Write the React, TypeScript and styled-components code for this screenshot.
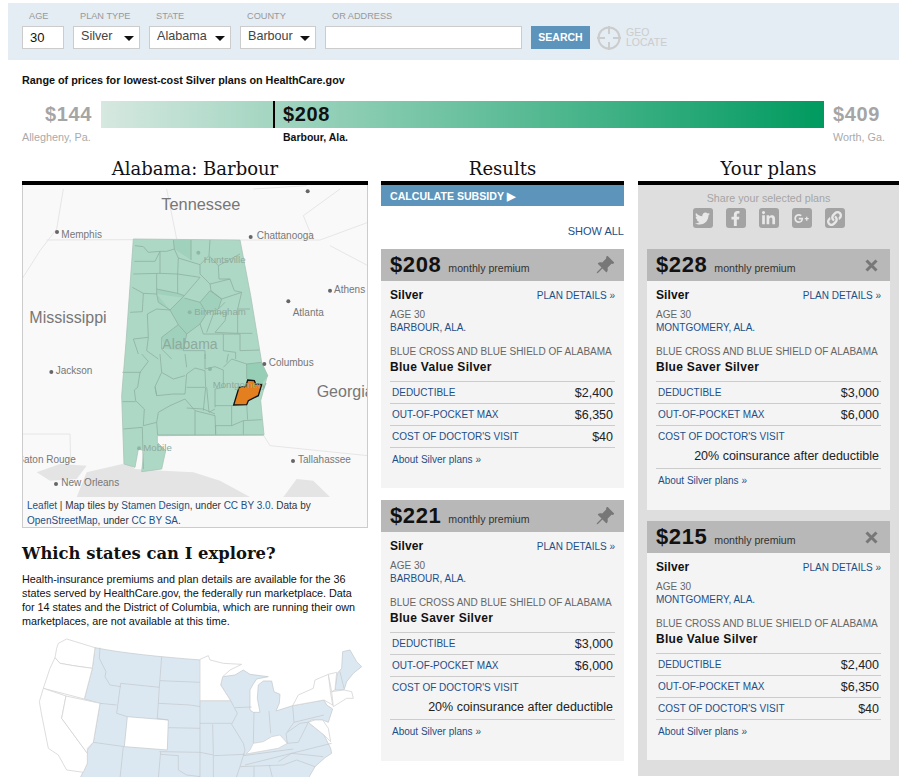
import styled, { createGlobalStyle } from "styled-components";
import { BsPinAngleFill } from "react-icons/bs";
import { FaFacebookF, FaGooglePlusG, FaLink, FaLinkedinIn, FaTwitter } from "react-icons/fa";

const GlobalStyle = createGlobalStyle`
  html, body {
    margin: 0;
    padding: 0;
    background: #fff;
    font-family: "Liberation Sans", Arial, sans-serif;
    overflow: hidden;
  }
`;

const Page = styled.div`
  width: 905px;
  height: 777px;
  overflow: hidden;
  padding-top: 3px;
  box-sizing: border-box;
`;

const SearchBar = styled.div`
  margin: 0 6px 0 8px;
  height: 57px;
  box-sizing: border-box;
  padding: 8px 0 0 14px;
  background: #e4ecf4;
  display: flex;
  gap: 9px;
`;

const Field = styled.div<{ $width: number }>`
  width: ${(p) => p.$width}px;
  flex: none;
`;

const FieldLabel = styled.div`
  height: 15px;
  padding-left: 7px;
  font-size: 9.2px;
  line-height: 10px;
  color: #999;
  white-space: nowrap;
`;

const InputBox = styled.div`
  height: 23px;
  box-sizing: border-box;
  background: #fff;
  border: 1px solid #ccc;
  font-size: 12.6px;
  line-height: 19px;
  padding-left: 7px;
  color: #444;
  position: relative;
`;

const AgeBox = styled(InputBox)`
  color: #111;
  font-size: 13px;
  line-height: 21px;
`;

const Caret = styled.span`
  position: absolute;
  right: 5px;
  top: 9px;
  border-left: 5px solid transparent;
  border-right: 5px solid transparent;
  border-top: 5px solid #111;
`;

const SearchButton = styled.div`
  margin-top: 15px;
  width: 59px;
  height: 23px;
  background: #5d94bb;
  color: #fff;
  font-size: 10.5px;
  font-weight: bold;
  line-height: 22px;
  text-align: center;
`;

const GeoLocate = styled.div`
  margin: 15px 0 0 -2px;
  height: 23px;
  display: flex;
  align-items: center;
  gap: 5px;
  color: #ccc;
  font-size: 10.5px;
  line-height: 9.5px;
`;

const RangeTitle = styled.div`
  margin: 14px 0 0 22px;
  font-size: 10.8px;
  line-height: 13px;
  font-weight: bold;
  color: #111;
`;

const RangeGrid = styled.div`
  margin: 14px 0 0 22px;
  display: grid;
  grid-template-columns: 70px 723px 70px;
  column-gap: 9px;
  row-gap: 2px;
`;

const RangeEnd = styled.div<{ $align: string }>`
  font-size: 20px;
  font-weight: bold;
  line-height: 27px;
  letter-spacing: 0.6px;
  color: #a5a5a5;
  text-align: ${(p) => p.$align};
`;

const RangeBar = styled.div`
  height: 27px;
  position: relative;
  background: linear-gradient(to right, #d6e8e0, #009a5f);
`;

const Marker = styled.div`
  position: absolute;
  left: 172px;
  top: 0;
  bottom: 0;
  border-left: 2px solid #000;
  padding-left: 8px;
  font-size: 20px;
  font-weight: bold;
  line-height: 27px;
  letter-spacing: 0.6px;
  color: #111;
`;

const RangePlace = styled.div`
  font-size: 10.8px;
  line-height: 14px;
  color: #aaa;
  white-space: nowrap;
`;

const RangeCurrent = styled.div`
  padding-left: 182px;
  font-size: 10.5px;
  font-weight: bold;
  line-height: 14px;
  color: #111;
`;

const Columns = styled.div`
  margin: 14px 0 0 22px;
  display: grid;
  grid-template-columns: 346px 243px 262px;
  column-gap: 13px;
  align-items: start;
`;

const RightColumn = styled.div`
  margin-left: 1px;
`;

const ColumnTitle = styled.h2`
  margin: 0;
  height: 27px;
  box-sizing: border-box;
  border-bottom: 4px solid #000;
  font-family: "DejaVu Serif", serif;
  font-size: 18px;
  font-weight: normal;
  line-height: 22px;
  text-align: center;
  color: #111;
  white-space: nowrap;
`;

const MapFrame = styled.div`
  height: 343px;
  box-sizing: border-box;
  border: 1px solid #ccc;
  border-top: 0;
  background: #f9f9f9;
  overflow: hidden;
`;

const MapSvg = styled.svg`
  display: block;
  margin-left: -1px;
`;

const Attribution = styled.div`
  padding: 1px 4px 0 4px;
  font-size: 10px;
  line-height: 15px;
  color: #333;
`;

const Link = styled.a`
  color: #1d4f87;
`;

const ExploreTitle = styled.h3`
  margin: 15px 0 0;
  font-family: "DejaVu Serif", serif;
  font-size: 16.4px;
  font-weight: bold;
  line-height: 22px;
  color: #111;
  white-space: nowrap;
`;

const ExploreText = styled.p`
  margin: 7px 0 0;
  padding-right: 6px;
  font-size: 10.8px;
  line-height: 14px;
  color: #111;
`;

const UsMap = styled.svg`
  display: block;
  margin-top: 7px;
`;

const SubsidyBar = styled.div`
  height: 21px;
  background: #5d94bb;
  color: #fff;
  font-size: 10.6px;
  font-weight: bold;
  line-height: 22px;
  padding-left: 9px;
`;

const ShowAll = styled.div`
  height: 43px;
  box-sizing: border-box;
  padding-top: 19px;
  font-size: 11px;
  line-height: 13px;
  text-align: right;
  color: #1d4f87;
`;

const CardStack = styled.div<{ $gap: number }>`
  display: flex;
  flex-direction: column;
  gap: ${(p) => p.$gap}px;
`;

const Card = styled.div`
  background: #f4f4f4;
`;

const CardHead = styled.div`
  height: 32px;
  background: #b8b8b8;
  display: flex;
  align-items: center;
  padding: 0 9px;
`;

const Premium = styled.span`
  font-size: 22px;
  font-weight: bold;
  letter-spacing: 0.6px;
  color: #111;
`;

const PremiumNote = styled.span`
  margin: 5px 0 0 7px;
  font-size: 10.6px;
  color: #333;
  flex: 1;
`;

const CardBody = styled.div<{ $height: number }>`
  padding: 7px 9px 0;
  height: ${(p) => p.$height}px;
  box-sizing: border-box;
`;

const MetalRow = styled.div`
  display: flex;
  justify-content: space-between;
  align-items: center;
  height: 14px;
`;

const Metal = styled.span`
  font-size: 12px;
  font-weight: bold;
  letter-spacing: 0.1px;
  color: #111;
`;

const DetailsLink = styled.span`
  font-size: 10px;
  color: #1d4f87;
`;

const Age = styled.div`
  margin-top: 6px;
  font-size: 10px;
  line-height: 13px;
  color: #666;
`;

const Place = styled.div`
  font-size: 10px;
  line-height: 13px;
  color: #1d4f87;
`;

const Carrier = styled.div`
  margin-top: 11px;
  font-size: 10px;
  line-height: 13px;
  color: #666;
  white-space: nowrap;
`;

const PlanName = styled.div`
  margin-top: 2px;
  height: 21px;
  font-size: 12px;
  line-height: 14px;
  font-weight: bold;
  letter-spacing: 0.3px;
  color: #111;
`;

const Stat = styled.div`
  border-top: 1px solid #ccc;
  height: 22px;
  box-sizing: border-box;
  padding: 0 2px;
  display: flex;
  justify-content: space-between;
  align-items: center;
`;

const StatName = styled.span`
  font-size: 10px;
  color: #1d4f87;
`;

const StatValue = styled.span`
  font-size: 12.5px;
  color: #222;
`;

const Coinsurance = styled.div`
  height: 21px;
  box-sizing: border-box;
  padding: 1px 2px 0;
  font-size: 12.5px;
  line-height: 17px;
  text-align: right;
  color: #222;
`;

const AboutLink = styled.div`
  border-top: 1px solid #ccc;
  padding: 5px 2px 0;
  font-size: 10px;
  line-height: 13px;
  color: #1d4f87;
`;

const PlansPanel = styled.div`
  background: #dedede;
  height: 591px;
  padding: 0 9px;
`;

const ShareBlock = styled.div`
  height: 64px;
  box-sizing: border-box;
  padding-top: 6px;
  text-align: center;
  font-size: 10.7px;
  line-height: 15px;
  color: #a5a5a5;
`;

const ShareIcons = styled.div`
  margin-top: 2px;
  display: flex;
  justify-content: center;
  gap: 13px;
`;

const ShareIcon = styled.span`
  width: 20px;
  height: 20px;
  border-radius: 3px;
  background: #a3a3a3;
  color: #e8e8e8;
  display: flex;
  align-items: center;
  justify-content: center;
  font-size: 15px;
`;

const CloseIcon = styled.svg`
  margin-right: 3px;
`;

const PinIcon = styled(BsPinAngleFill)`
  color: #777;
  font-size: 20px;
`;

type Plan = {
  price: string;
  place: string;
  name: string;
  deductible: string;
  maxCost: string;
  visit?: string;
};

const results: Plan[] = [
  { price: "$208", place: "BARBOUR, ALA.", name: "Blue Value Silver", deductible: "$2,400", maxCost: "$6,350", visit: "$40" },
  { price: "$221", place: "BARBOUR, ALA.", name: "Blue Saver Silver", deductible: "$3,000", maxCost: "$6,000" },
];

const saved: Plan[] = [
  { price: "$228", place: "MONTGOMERY, ALA.", name: "Blue Saver Silver", deductible: "$3,000", maxCost: "$6,000" },
  { price: "$215", place: "MONTGOMERY, ALA.", name: "Blue Value Silver", deductible: "$2,400", maxCost: "$6,350", visit: "$40" },
];

function PlanCard({ plan, removable }: { plan: Plan; removable?: boolean }) {
  return (
    <Card>
      <CardHead>
        <Premium>{plan.price}</Premium>
        <PremiumNote>monthly premium</PremiumNote>
        {removable ? (
          <CloseIcon width="13" height="13" viewBox="0 0 13 13">
            <path d="M1.5 1.5l10 10M11.5 1.5l-10 10" stroke="#777" strokeWidth="3" />
          </CloseIcon>
        ) : (
          <PinIcon />
        )}
      </CardHead>
      <CardBody $height={plan.visit ? 207 : 229}>
        <MetalRow>
          <Metal>Silver</Metal>
          <DetailsLink>PLAN DETAILS »</DetailsLink>
        </MetalRow>
        <Age>AGE 30</Age>
        <Place>{plan.place}</Place>
        <Carrier>BLUE CROSS AND BLUE SHIELD OF ALABAMA</Carrier>
        <PlanName>{plan.name}</PlanName>
        <Stat>
          <StatName>DEDUCTIBLE</StatName>
          <StatValue>{plan.deductible}</StatValue>
        </Stat>
        <Stat>
          <StatName>OUT-OF-POCKET MAX</StatName>
          <StatValue>{plan.maxCost}</StatValue>
        </Stat>
        <Stat>
          <StatName>COST OF DOCTOR'S VISIT</StatName>
          {plan.visit && <StatValue>{plan.visit}</StatValue>}
        </Stat>
        {!plan.visit && <Coinsurance>20% coinsurance after deductible</Coinsurance>}
        <AboutLink>About Silver plans »</AboutLink>
      </CardBody>
    </Card>
  );
}

const northCounties = `M60,35 L85,38 L100,55 L135,52 L155,52 L178,45 L175,18 M135,52 L120,82 L58,82 M135,52 L135,118 L55,120
M178,45 L190,72 L188,120 M190,72 L255,92 L255,120 M228,18 L228,78 M285,18 L282,65 L255,92 M282,65 L310,95 L375,60
M310,95 L312,135 L345,135 L358,170 L380,175 M255,120 L285,150 L345,135 M285,150 L288,170 L320,195 M135,118 L188,120 L255,130
M188,120 L188,178 L208,185 L255,130 M125,120 L125,180 L85,178 L82,233 L45,235 M52,160 L85,178 M125,165 L188,178
M125,180 L130,205 L165,228 L125,225 L97,240 L100,310 M208,185 L165,228 L190,272 L140,310 M208,192 L255,205 L275,238 L255,270 L215,300 L190,272
M255,205 L285,170 L320,195 L310,225 L275,238 M320,195 L380,175 L368,225 L368,298 M310,225 L330,205 M275,295 L295,240 L335,235 L330,260 L300,295
M300,295 L368,298 L412,298 M368,225 L405,225 M255,270 L265,300 L325,300 L325,350 M215,300 L205,350 M325,300 L375,300 L375,350 L435,348
M100,310 L55,315 L70,360 M100,310 L95,350 L130,375 M140,310 L140,345 L170,375 M205,350 L270,350 L270,375 M325,350 L362,355 L362,375`;

const southCounties = `M80,0 L100,22 L75,55 L68,100 L58,108 L62,140 L88,165 L85,215 L125,205 L130,175 L165,155 L210,135 L240,170 L300,185 L302,240
M125,205 L128,243 M135,0 L140,55 L120,98 L125,125 L175,120 L210,120 L215,60 L240,42 L270,50 L272,100 L265,170 M215,100 L270,100
M215,162 L265,165 L300,180 M140,55 L175,75 L210,65 M210,0 L215,40 M270,45 L300,38 L325,48 L325,100 L300,105 L300,160 M275,100 L282,175 L300,165
M325,40 L350,15 L395,30 L395,75 M270,0 L270,45 M340,0 L335,25 M300,155 L355,155 M350,155 L350,215 L385,200 L440,197 M395,150 L398,197
M300,215 L350,215 M385,200 L385,243 M240,170 L240,243 M22,55 L78,55 M22,143 L62,143 M25,225 L82,220 L85,345 M125,125 L120,98 M395,30 L440,25
M128,243 L445,243 M302,215 L302,243`;

function AlabamaMap() {
  return (
    <MapSvg width="346" height="312" viewBox="6 18 1038 936">
      <g fill="none" stroke="#e6e6e6" strokeWidth="3">
        <path d="M6,300 L60,215 L110,150 L130,30 M80,183 L340,182 M660,183 L900,183 L1044,130 M880,183 L850,110 L960,30 M930,200 L1044,260 M730,768 L750,800 L1044,830 M6,765 L150,765 L152,850 M700,30 L860,20 M440,30 L470,180" />
      </g>
      <path d="M170,954 L200,880 L320,852 L345,870 L430,875 L520,880 L600,905 L690,954 Z M50,880 L120,855 L200,860 L170,900 L90,905 Z M790,954 L830,900 L880,905 L930,954 Z" fill="#e4e4e4" />
      <path d="M340,180 L660,183 L692,350 L725,550 L742,590 L722,665 L732,768 L412,770 L412,790 L437,815 L425,870 L365,878 L372,815 L355,810 L345,865 L312,855 L305,650 L318,490 Z" fill="#aed8c6" />
      <g transform="translate(285,165)">
        <path d="M175,18 L228,18 L228,78 L178,45 Z M125,165 L188,178 L208,185 L165,228 L130,205 Z M255,205 L285,170 L320,195 L310,225 L275,238 Z M190,272 L215,300 L205,350 L150,345 L140,310 Z M125,180 L165,228 L190,272 L215,300 L255,270 L275,238 L255,205 L208,192 Z" fill="#a0d1bc" />
        <path d={northCounties} fill="none" stroke="#8eb0a0" strokeWidth="2.4" />
      </g>
      <g transform="translate(285,525)">
        <path d="M395,30 L440,25 L460,65 L440,90 L395,75 Z" fill="#97cfb6" />
        <path d={southCounties} fill="none" stroke="#8eb0a0" strokeWidth="2.4" />
        <path d="M398,78 L418,80 L422,90 L440,92 L430,125 L400,140 L395,152 L356,153 L372,100 L392,98 Z" fill="#e47f1f" stroke="#111" strokeWidth="4" />
      </g>
      <path d="M340,180 L660,183 L692,350 L725,550 L742,590 L722,665 L732,768 L412,770 L412,790 L437,815 L425,870 L365,878 L372,815 L355,810 L345,865 L312,855 L305,650 L318,490 Z" fill="none" stroke="#a8c4b6" strokeWidth="2.4" />
      <g fontFamily="'Liberation Sans', Arial, sans-serif" fill="#777">
        <text x="424" y="92" fontSize="49">Tennessee</text>
        <text x="28" y="433" fontSize="48">Mississippi</text>
        <text x="890" y="653" fontSize="48">Georgia</text>
        <g fontSize="30">
          <text x="124" y="177">Memphis</text>
          <text x="710" y="181">Chattanooga</text>
          <text x="942" y="341">Athens</text>
          <text x="818" y="410">Atlanta</text>
          <text x="746" y="561">Columbus</text>
          <text x="107" y="585">Jackson</text>
          <text x="-8" y="851">Baton Rouge</text>
          <text x="834" y="852">Tallahassee</text>
          <text x="124" y="921">New Orleans</text>
        </g>
        <g fill="#8eaa9c">
          <text x="551" y="252" fontSize="29">Huntsville</text>
          <text x="523" y="407" fontSize="29">Birmingham</text>
          <text x="427" y="510" fontSize="42">Alabama</text>
          <text x="578" y="628" fontSize="29">Montgomery</text>
          <text x="370" y="815" fontSize="29">Mobile</text>
        </g>
        <g fill="#666">
          <circle cx="863" cy="37" r="6" />
          <circle cx="111" cy="159" r="6" />
          <circle cx="692" cy="174" r="6" />
          <circle cx="930" cy="335" r="6" />
          <circle cx="805" cy="367" r="6" />
          <circle cx="733" cy="555" r="6" />
          <circle cx="94" cy="579" r="6" />
          <circle cx="819" cy="846" r="6" />
          <circle cx="108" cy="915" r="6" />
        </g>
        <g fill="#8eb8a5">
          <circle cx="535" cy="221" r="6" />
          <circle cx="509" cy="400" r="6" />
          <circle cx="570" cy="570" r="6" />
          <circle cx="357" cy="808" r="6" />
        </g>
      </g>
    </MapSvg>
  );
}

function StatesMap() {
  return (
    <UsMap width="346" height="142" viewBox="22 635 346 142">
      <g transform="translate(30,635) scale(0.3333)" stroke="#c2c9ce" strokeWidth="2.2" strokeLinejoin="round">
        <path d="M195,38 C280,55 395,66 512,75 L512,430 L150,430 L172,385 L172,345 L190,322 L210,205 L163,192 L187,100 Z" fill="#dce8f1" />
        <g fill="#fff" stroke="#d0d0d0">
          <path d="M110,12 L195,38 L187,100 L130,92 L90,85 L75,68 L80,40 L85,25 Z" />
          <path d="M75,68 L90,85 L130,92 L187,100 L163,192 L40,160 L60,100 Z" />
          <path d="M40,160 L108,183 L95,250 L172,355 L172,385 L160,412 L110,405 L85,360 L55,340 L35,240 L28,200 Z" />
          <path d="M108,183 L210,205 L190,322 L172,340 L172,355 L95,250 Z" />
        </g>
        <path d="M292,245 L415,255 L412,345 L283,335 Z" fill="#fff" />
        <path d="M210,38 L208,70 L228,110 L225,125 L240,150 L272,155 M272,145 L388,157 L382,250 M272,145 L260,235 L292,245 M210,205 L260,210 M190,322 L283,335 M280,335 L270,430 M392,350 L385,430 M388,350 L512,352 M392,358 L445,362 L445,405 L470,420 L512,425 M390,137 L512,142 M395,66 L388,157 M385,205 L480,210 L512,215 M415,278 L512,280 M380,250 L415,255" fill="none" />
      </g>
      <g transform="translate(200,635) scale(0.3333)" stroke="#c2c9ce" strokeWidth="2.2" strokeLinejoin="round">
        <path d="M0,197 L92,197 L62,150 L68,125 L105,120 L130,105 L150,118 L205,125 L170,132 L158,150 L150,165 L150,225 L160,232 L180,232 L172,190 L175,150 L190,138 L215,138 L222,170 L240,178 L238,205 L228,228 L278,212 L372,195 L380,210 L398,222 L392,240 L385,262 L368,255 L335,255 L325,262 L372,300 L392,340 L395,355 L375,368 L345,395 L325,430 L0,430 Z" fill="#dce8f1" />
        <path d="M405,165 L412,115 L425,100 L428,50 L450,45 L470,80 L485,95 L460,115 L440,140 L432,165 Z" fill="#dce8f1" />
        <path d="M0,73 L25,62 L30,75 L70,85 L125,88 L90,105 L68,125 L62,150 L92,197 L0,197 Z" fill="#fff" stroke="#d0d0d0" />
        <g fill="#fff" stroke="#d0d0d0">
          <path d="M138,357 L150,345 L160,325 L190,320 L215,305 L240,300 L262,325 L235,340 Z" />
          <path d="M278,212 L295,180 L340,160 L345,135 L385,118 L392,175 L398,210 L372,195 Z" />
          <path d="M385,118 L410,112 L405,165 L395,170 Z" />
          <path d="M395,170 L432,165 L455,170 L460,190 L440,190 L400,215 Z" />
          <path d="M325,262 L345,255 L368,255 L385,280 L392,320 L372,300 Z" />
        </g>
        <path d="M420,110 L432,160 M105,218 L155,216 M92,197 L112,235 L95,268 L130,325 L135,345 L120,395 L108,430 M162,232 L160,325 M207,228 L212,295 M278,212 L282,262 L262,290 M282,262 L372,240 M262,325 L258,295 L300,265 L325,262 M262,325 L295,322 L325,262 M135,390 L395,325 M130,362 L280,342 M235,380 L275,355 L370,365 M250,390 L290,375 L345,395 M162,395 L162,430 M208,390 L218,430 M120,395 L250,390 M0,265 L95,265 M38,268 L40,360 L0,352 M40,362 L135,358 M40,362 L40,430" fill="none" />
      </g>
    </UsMap>
  );
}

function App() {
  return (
    <Page>
      <GlobalStyle />
      <SearchBar>
        <Field $width={42}>
          <FieldLabel>AGE</FieldLabel>
          <AgeBox>30</AgeBox>
        </Field>
        <Field $width={67}>
          <FieldLabel>PLAN TYPE</FieldLabel>
          <InputBox>Silver<Caret /></InputBox>
        </Field>
        <Field $width={82}>
          <FieldLabel>STATE</FieldLabel>
          <InputBox>Alabama<Caret /></InputBox>
        </Field>
        <Field $width={76}>
          <FieldLabel>COUNTY</FieldLabel>
          <InputBox>Barbour<Caret /></InputBox>
        </Field>
        <Field $width={197}>
          <FieldLabel>OR ADDRESS</FieldLabel>
          <InputBox />
        </Field>
        <SearchButton>SEARCH</SearchButton>
        <GeoLocate>
          <svg width="24" height="24" viewBox="0 0 24 24" fill="none" stroke="#ccc" strokeWidth="2">
            <circle cx="12" cy="12" r="10.5" />
            <path d="M12 0v8M12 16v8M0 12h8M16 12h8" />
          </svg>
          <span>GEO<br />LOCATE</span>
        </GeoLocate>
      </SearchBar>

      <RangeTitle>Range of prices for lowest-cost Silver plans on HealthCare.gov</RangeTitle>
      <RangeGrid>
        <RangeEnd $align="right">$144</RangeEnd>
        <RangeBar><Marker>$208</Marker></RangeBar>
        <RangeEnd $align="left">$409</RangeEnd>
        <RangePlace>Allegheny, Pa.</RangePlace>
        <RangeCurrent>Barbour, Ala.</RangeCurrent>
        <RangePlace>Worth, Ga.</RangePlace>
      </RangeGrid>

      <Columns>
        <div>
          <ColumnTitle>Alabama: Barbour</ColumnTitle>
          <MapFrame>
            <AlabamaMap />
            <Attribution>
              <Link>Leaflet</Link> | Map tiles by <Link>Stamen Design</Link>, under <Link>CC BY 3.0</Link>. Data by{" "}
              <Link>OpenStreetMap</Link>, under <Link>CC BY SA</Link>.
            </Attribution>
          </MapFrame>
          <ExploreTitle>Which states can I explore?</ExploreTitle>
          <ExploreText>
            Health-insurance premiums and plan details are available for the 36 states served by HealthCare.gov, the
            federally run marketplace. Data for 14 states and the District of Columbia, which are running their own
            marketplaces, are not available at this time.
          </ExploreText>
          <StatesMap />
        </div>
        <div>
          <ColumnTitle>Results</ColumnTitle>
          <SubsidyBar>CALCULATE SUBSIDY ▶</SubsidyBar>
          <ShowAll>SHOW ALL</ShowAll>
          <CardStack $gap={12}>
            {results.map((plan) => (
              <PlanCard key={plan.price} plan={plan} />
            ))}
          </CardStack>
        </div>
        <RightColumn>
          <ColumnTitle>Your plans</ColumnTitle>
          <PlansPanel>
            <ShareBlock>
              Share your selected plans
              <ShareIcons>
                <ShareIcon><FaTwitter /></ShareIcon>
                <ShareIcon><FaFacebookF /></ShareIcon>
                <ShareIcon><FaLinkedinIn /></ShareIcon>
                <ShareIcon><FaGooglePlusG /></ShareIcon>
                <ShareIcon><FaLink /></ShareIcon>
              </ShareIcons>
            </ShareBlock>
            <CardStack $gap={11}>
              {saved.map((plan) => (
                <PlanCard key={plan.price} plan={plan} removable />
              ))}
            </CardStack>
          </PlansPanel>
        </RightColumn>
      </Columns>
    </Page>
  );
}

export default App;
